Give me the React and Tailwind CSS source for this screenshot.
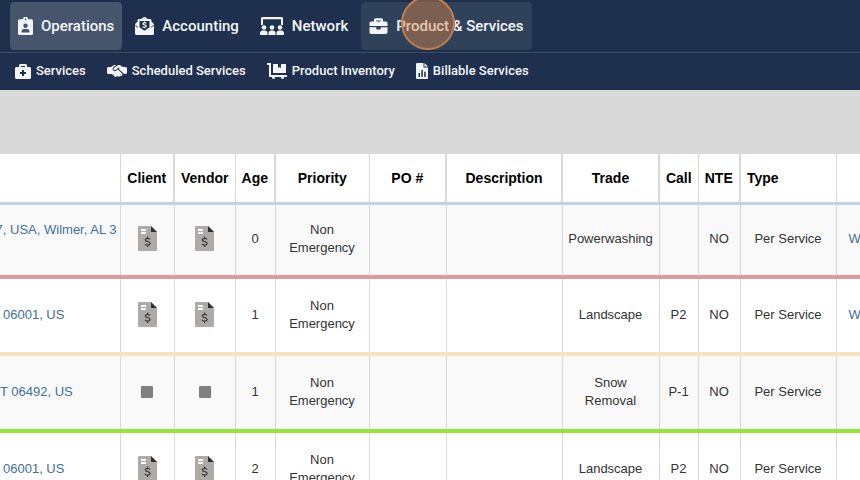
import React from 'react';
import { FaBriefcase, FaBriefcaseMedical, FaDollyFlatbed } from 'react-icons/fa';
import { FaHandshakeSimple } from 'react-icons/fa6';

function ClipboardUserIcon({ className }) {
  return (
    <svg viewBox="0 0 15 18" className={className} fill="currentColor" aria-hidden="true">
      <path
        fillRule="evenodd"
        d="M1.500 2.200h3.500a2.500 2.500 0 0 1 5 0h3.500A1.500 1.500 0 0 1 15 3.700v12.800a1.500 1.500 0 0 1-1.500 1.500h-12A1.500 1.500 0 0 1 0 16.500V3.700a1.500 1.500 0 0 1 1.500-1.500ZM7.500 1.600a.8.8 0 1 0 0 1.600.8.8 0 0 0 0-1.600ZM7.500 6.500a2.200 2.200 0 1 0 0 4.400 2.200 2.200 0 0 0 0-4.400ZM6 12A2.500 2.500 0 0 0 3.500 14.300v1.200h8v-1.200A2.500 2.500 0 0 0 9 12Z"
      />
    </svg>
  );
}

function EnvelopeDollarIcon({ className }) {
  return (
    <svg viewBox="0 0 19 18" className={className} aria-hidden="true">
      <path
        fill="currentColor"
        d="M0 7 2.500 4.800V3.500A1.500 1.500 0 0 1 4 2h2.200L8 .6a2.400 2.400 0 0 1 3 0L12.800 2H15a1.500 1.500 0 0 1 1.500 1.500v1.300L19 7v9.500a1.500 1.500 0 0 1-1.500 1.500h-16A1.500 1.500 0 0 1 0 16.500Z"
      />
      <path fill="#1e304d" d="M4.500 4h10v6.200l-4.200 3.100a1.400 1.400 0 0 1-1.600 0L4.500 10.200Z" />
      <path d="m.3 8.200 2.500 2M18.700 8.200l-2.500 2" stroke="#1e304d" strokeWidth="1" />
      <path
        d="M11.200 6.400c-.3-.5-.9-.8-1.700-.8-1 0-1.700.4-1.700 1.100 0 1.600 3.500.7 3.500 2.400 0 .8-.7 1.200-1.800 1.200-.9 0-1.500-.3-1.800-.9M9.500 4.600v1M9.500 10.300v1"
        fill="none"
        stroke="currentColor"
        strokeWidth="1.200"
      />
    </svg>
  );
}

function ScreenUsersIcon({ className }) {
  return (
    <svg viewBox="0 0 24 18" className={className} fill="currentColor" aria-hidden="true">
      <path d="M1 1.500A1.500 1.500 0 0 1 2.500 0h19A1.500 1.500 0 0 1 23 1.500V8h-2V2.200H3V8H1Z" />
      <circle cx="4" cy="10.500" r="2.300" />
      <circle cx="12" cy="10.500" r="2.300" />
      <circle cx="20" cy="10.500" r="2.300" />
      <path d="M0 18v-1.500a3 3 0 0 1 3-3h2a3 3 0 0 1 2.500 1.500v3ZM8.500 18v-1.500a3 3 0 0 1 3-3h1a3 3 0 0 1 3 3V18ZM16.500 18v-3a3 3 0 0 1 2.500-1.500h2a3 3 0 0 1 3 3V18Z" />
    </svg>
  );
}

function FileChartIcon({ className }) {
  return (
    <svg viewBox="0 0 12 16" className={className} fill="currentColor" aria-hidden="true">
      <path
        fillRule="evenodd"
        d="M1 0h6.500v4.500H12V15a1 1 0 0 1-1 1H1a1 1 0 0 1-1-1V1a1 1 0 0 1 1-1ZM2.500 10v4H4v-4ZM5.300 7v7h1.500V7ZM8.200 8.800V14h1.500V8.800Z"
      />
      <path d="M8.400 0 12 3.600H8.400Z" />
    </svg>
  );
}

function InvoiceIcon({ label }) {
  return (
    <svg viewBox="0 0 19 25" className="mx-auto h-[25px] w-[19px]" role="img" aria-label={label}>
      <path d="M1 0h12l6 6v18a1 1 0 0 1-1 1H1a1 1 0 0 1-1-1V1a1 1 0 0 1 1-1Z" fill="#aeaaa8" />
      <path d="M13 0l6 6h-6Z" fill="#332f30" />
      <path d="M3 3h5v2H3ZM3 6h5v2H3Z" fill="#fff" />
      <path
        d="M12 13.500c-.4-.8-1.300-1.200-2.400-1.200-1.300 0-2.200.6-2.200 1.600 0 2.300 4.700 1.100 4.700 3.400 0 1.100-1 1.800-2.500 1.800-1.200 0-2.200-.5-2.600-1.400M9.600 10.500v1.800M9.600 19.100V21"
        fill="none"
        stroke="#3a3637"
        strokeWidth="1.200"
      />
    </svg>
  );
}

function EmptySquare({ label }) {
  return <span role="img" aria-label={label} className="mx-auto block h-3 w-3 rounded-[1px] bg-[#7f7f7f]" />;
}

const columns = [
  { label: 'Client', head: 'border-r-2' },
  { label: 'Vendor', head: 'border-r' },
  { label: 'Age', head: 'border-r-2' },
  { label: 'Priority', head: 'border-r' },
  { label: 'PO #', head: 'border-r-2' },
  { label: 'Description', head: 'border-r-2' },
  { label: 'Trade', head: 'border-r-2' },
  { label: 'Call', head: 'border-r' },
  { label: 'NTE', head: 'border-r-2' },
  { label: 'Type', head: 'border-r text-left pl-1.5' },
];

const rows = [
  { address: '7, USA, Wilmer, AL 3', place: 'justify-end pr-[3px] pb-[18px]', invoiced: true, age: 0, trade: 'Powerwashing', call: '', link: 'W', line: 'h-[74px] border-b-[#dc9a98] bg-[#f9f9f9]' },
  { address: '06001, US', place: 'pl-[3px]', invoiced: true, age: 1, trade: 'Landscape', call: 'P2', link: 'W', line: 'h-[77px] border-b-[#f9e0c0]' },
  { address: 'T 06492, US', place: '', invoiced: false, age: 1, trade: 'Snow Removal', call: 'P-1', link: '', line: 'h-[77px] border-b-[#93e53c] bg-[#f9f9f9]' },
  { address: '06001, US', place: 'pl-[3px]', invoiced: true, age: 2, trade: 'Landscape', call: 'P2', link: '', line: 'h-[77px] border-b-[#dc9a98]' },
];

export default function App() {
  return (
    <div className="h-screen overflow-hidden bg-[#d9d9d9] font-['Liberation_Sans',Arial,sans-serif]">
      <header className="bg-[#1e304d] font-[Roboto,sans-serif] text-[#f2f6fa]">
        {/* Main menu */}
        <nav className="flex h-[53px] items-start gap-[5px] border-b border-[#3b4b65] pt-0.5 pl-2.5 text-[15px] font-medium" aria-label="Main">
          <a href="#operations" className="flex h-12 items-center rounded bg-[#46546c] px-2">
            <ClipboardUserIcon className="mr-2 h-[18px] w-[15px]" />
            Operations
          </a>
          <a href="#accounting" className="flex h-12 items-center px-2">
            <EnvelopeDollarIcon className="mr-2 h-[18px] w-[19px]" />
            Accounting
          </a>
          <a href="#network" className="flex h-12 items-center px-2">
            <ScreenUsersIcon className="mr-2 h-[18px] w-6" />
            Network
          </a>
          <a href="#products" className="relative flex h-12 items-center rounded bg-[#2f4259] px-2">
            <FaBriefcase className="mr-2 h-[18px] w-[19px]" />
            Product &amp; Services
            <span className="absolute -top-1.5 left-10 h-[54px] w-[54px] rounded-full border-2 border-[#c07f50] bg-[#d98548]/45" />
          </a>
        </nav>

        {/* Sub menu */}
        <nav className="flex h-[37px] items-center gap-[21px] pb-0.5 pl-[15px] text-[13px] font-medium" aria-label="Operations">
          <a href="#services" className="flex items-center gap-[5px]">
            <FaBriefcaseMedical className="h-4 w-4" />
            Services
          </a>
          <a href="#scheduled" className="flex items-center gap-[5px]">
            <FaHandshakeSimple className="h-4 w-5" />
            Scheduled Services
          </a>
          <a href="#inventory" className="flex items-center gap-[5px]">
            <FaDollyFlatbed className="h-4 w-5" />
            Product Inventory
          </a>
          <a href="#billable" className="flex items-center gap-[5px]">
            <FileChartIcon className="h-4 w-3" />
            Billable Services
          </a>
        </nav>
      </header>

      <main className="pt-16">
        <table className="w-full table-fixed border-collapse bg-white text-center text-[13px] leading-[18px] text-[#333]">
          <colgroup>
            <col className="w-[120px]" />
            <col className="w-[54px]" />
            <col className="w-[61px]" />
            <col className="w-[40px]" />
            <col className="w-[94px]" />
            <col className="w-[77px]" />
            <col className="w-[116px]" />
            <col className="w-[97px]" />
            <col className="w-[39px]" />
            <col className="w-[42px]" />
            <col className="w-[96px]" />
            <col />
          </colgroup>
          <thead>
            <tr className="h-[49px] border-b-3 border-b-[#bdd4ea] text-[14px] text-black">
              <th className="border-r border-r-[#d8d8d8]" aria-label="Address" />
              {columns.map((col) => (
                <th key={col.label} scope="col" className={`border-r-[#d8d8d8] font-bold ${col.head}`}>
                  {col.label}
                </th>
              ))}
              <th aria-label="Work order" />
            </tr>
          </thead>
          <tbody>
            {rows.map((row, i) => (
              <tr key={i} className={`border-b-4 *:pb-0.5 ${row.line}`}>
                <td className="overflow-hidden border-r border-r-[#d8d8d8] whitespace-nowrap">
                  <a href="#address" className={`flex text-[#41709c] ${row.place}`}>
                    {row.address}
                  </a>
                </td>
                <td className="border-r border-r-[#d8d8d8]">
                  {row.invoiced ? <InvoiceIcon label="Client invoice" /> : <EmptySquare label="No client invoice" />}
                </td>
                <td className="border-r border-r-[#d8d8d8]">
                  {row.invoiced ? <InvoiceIcon label="Vendor invoice" /> : <EmptySquare label="No vendor invoice" />}
                </td>
                <td className="border-r border-r-[#d8d8d8]">{row.age}</td>
                <td className="border-r border-r-[#d8d8d8] px-3">Non Emergency</td>
                <td className="border-r border-r-[#d8d8d8]" />
                <td className="border-r border-r-[#d8d8d8]" />
                <td className="border-r border-r-[#d8d8d8] px-[5px]">{row.trade}</td>
                <td className="border-r border-r-[#d8d8d8]">{row.call}</td>
                <td className="border-r border-r-[#d8d8d8]">NO</td>
                <td className="border-r border-r-[#d8d8d8]">Per Service</td>
                <td className="overflow-hidden pl-3 text-left">
                  <a href="#order" className="text-[#41709c]">{row.link}</a>
                </td>
              </tr>
            ))}
          </tbody>
        </table>
      </main>
    </div>
  );
}
